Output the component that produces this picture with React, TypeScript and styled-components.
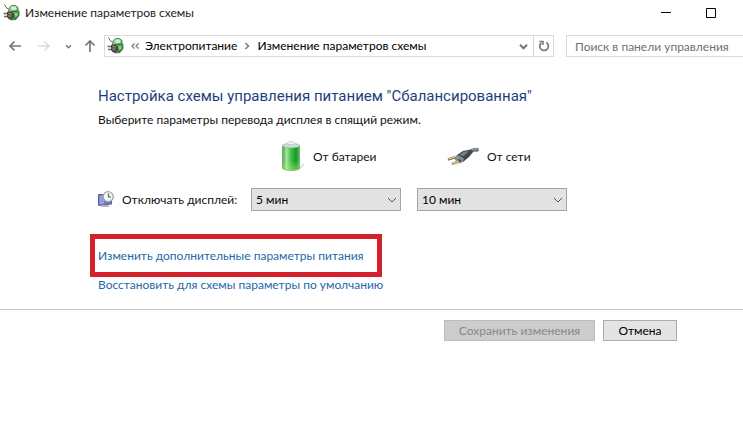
import React from "react";
import styled, { createGlobalStyle } from "styled-components";

const GlobalStyle = createGlobalStyle`
  *, *::before, *::after { box-sizing: border-box; }
  body {
    margin: 0;
    background: #fff;
    color: #111;
    font-family: Lato, "Open Sans", sans-serif;
    font-size: 12px;
    line-height: 16px;
  }
  button, input, select { font: inherit; color: inherit; }
  svg { flex: none; }
`;

const Window = styled.div`
  overflow: hidden;
  white-space: nowrap;
`;

const TitleBar = styled.header`
  display: flex;
  align-items: center;
  gap: 4px;
  height: 26px;
  padding-left: 3px;
`;

const Title = styled.span`
  flex: 1;
  color: #222;
`;

const WindowButton = styled.button`
  display: flex;
  align-items: center;
  justify-content: center;
  width: 41px;
  height: 26px;
  padding: 0;
  border: 0;
  background: none;
  color: #000;
  &:last-child { margin-right: 12px; }
`;

const NavBar = styled.nav`
  display: flex;
  align-items: center;
  height: 22px;
  margin-top: 9px;
`;

const NavButton = styled.button<{ $width: number; $faded?: boolean }>`
  display: flex;
  align-items: center;
  justify-content: center;
  width: ${(p) => p.$width}px;
  height: 22px;
  padding: 0;
  border: 0;
  background: none;
  color: ${(p) => (p.$faded ? "#dcdcdc" : "#777")};
`;

const History = styled.div`
  display: flex;
  width: 104px;
  padding-left: 2px;
`;

const Address = styled.div`
  display: flex;
  align-items: center;
  flex: 1;
  min-width: 0;
  height: 22px;
  padding-left: 2px;
  border: 1px solid #d9d9d9;
`;

const Crumb = styled.a`
  color: #000;
  text-decoration: none;
`;

const CrumbMark = styled.span<{ $width: number }>`
  display: flex;
  justify-content: center;
  width: ${(p) => p.$width}px;
  color: #777;
`;

const AddressSpacer = styled.span`
  flex: 1;
`;

const Refresh = styled(NavButton)`
  height: 20px;
  border-left: 1px solid #d9d9d9;
`;

const Search = styled.input`
  width: 177px;
  height: 22px;
  margin-left: 12px;
  padding: 0 0 0 8px;
  border: 1px solid #d9d9d9;
  border-right: 0;
  border-radius: 0;
  outline: 0;
  &::placeholder { color: #707070; opacity: 1; }
`;

const Content = styled.main`
  padding: 27px 24px 16px 98px;
`;

const Heading = styled.h1`
  margin: 0;
  color: #1f3f7c;
  font-family: Roboto, "Open Sans", sans-serif;
  font-size: 15px;
  font-weight: 400;
  line-height: 24px;
`;

const Lead = styled.p`
  margin: 4px 0 0;
`;

const Settings = styled.div`
  display: grid;
  grid-template-columns: 137px 150px 150px;
  column-gap: 16px;
  row-gap: 14px;
  align-items: center;
  margin-top: 12px;
`;

const Source = styled.div`
  display: flex;
  align-items: center;
  gap: 8px;
  height: 34px;
  padding-left: 30px;
`;

const SettingLabel = styled.label`
  display: flex;
  align-items: center;
  gap: 8px;
`;

const SelectBox = styled.div`
  display: grid;
  align-items: center;
  > * { grid-area: 1 / 1; }
  svg {
    justify-self: end;
    margin-right: 4px;
    color: #555;
    pointer-events: none;
  }
`;

const Select = styled.select`
  appearance: none;
  width: 100%;
  height: 23px;
  padding: 0 20px 0 4px;
  border: 1px solid #a5a5a5;
  border-radius: 0;
  background: #e2e2e2;
  color: #000;
`;

const Links = styled.div`
  display: flex;
  flex-direction: column;
  align-items: flex-start;
  margin-top: 23px;
`;

const Highlight = styled.div`
  margin-left: -8px;
  padding: 9px 13px 8px 3px;
  border: 5px solid #d3202b;
`;

const TaskLink = styled.a`
  display: block;
  color: #1f67a8;
  text-decoration: none;
`;

const Footer = styled.footer`
  display: flex;
  justify-content: flex-end;
  gap: 8px;
  padding: 10px 66px 0 0;
  border-top: 1px solid #c8c8c8;
`;

const ActionButton = styled.button<{ $width: number }>`
  width: ${(p) => p.$width}px;
  height: 21px;
  padding: 0;
  border: 1px solid #adadad;
  background: #e4e4e4;
  color: #000;
  line-height: 16px;
  &:disabled {
    border-color: #bdbdbd;
    background: #cccccc;
    color: #888;
  }
`;

const PowerIcon = () => (
  <svg width="18" height="18" viewBox="0 0 18 18" aria-hidden="true">
    <defs>
      <linearGradient id="power-body" x1="0" y1="0" x2=".8" y2="1">
        <stop offset="0" stopColor="#b9e6b4" />
        <stop offset=".55" stopColor="#5fb064" />
        <stop offset="1" stopColor="#1f6a33" />
      </linearGradient>
    </defs>
    <path d="M6 4 8.500 1.500h4L15 3.500v2.500l1 1.500v4L13 15.500 8 16l-3-3z" fill="url(#power-body)" stroke="#39703f" strokeWidth=".8" />
    <path d="M8 4 9 2.500h3.500L14 4.500 12.500 6H9z" fill="#d3f0ce" />
    <path d="M8 7.500h6" stroke="#2d6a38" strokeWidth=".9" />
    <path d="M11.500 9h3v2.500l-2 2z" fill="#8fd08c" />
    <path d="M1.500.5 3 3.500 5.500 5" stroke="#566b58" strokeWidth="1" fill="none" />
    <path d="M.5 9.500H5M1 12.500h4.500" stroke="#7b684f" strokeWidth="1.500" />
    <path d="M4.500 8H8l2.500 1.500V13L8 15H6l-1.500-2z" fill="#5a504a" stroke="#2b2925" strokeWidth=".6" />
    <path d="M5.500 9.500l3 .5M5.500 12H8" stroke="#c3ad8c" strokeWidth=".8" />
  </svg>
);

const Arrow = ({ turn }: { turn: number }) => (
  <svg width="14" height="14" viewBox="0 0 14 14" aria-hidden="true">
    <path
      d="M13 7H2M6.500 2.500 2 7l4.500 4.500"
      transform={`rotate(${turn} 7 7)`}
      fill="none"
      stroke="currentColor"
      strokeWidth="1.700"
    />
  </svg>
);

const Chevron = ({ size, weight }: { size: number; weight: number }) => (
  <svg width={size} height={size} viewBox={`0 0 ${size} ${size}`} aria-hidden="true">
    <path
      d={`M1 ${size / 4 + 0.5}L${size / 2} ${size * 0.75 - 0.5}L${size - 1} ${size / 4 + 0.5}`}
      fill="none"
      stroke="currentColor"
      strokeWidth={weight}
    />
  </svg>
);

const CrumbChevron = () => (
  <svg width="6" height="8" viewBox="0 0 6 8" aria-hidden="true">
    <path d="M1.500 1 4.500 4l-3 3" fill="none" stroke="currentColor" strokeWidth="1.500" />
  </svg>
);

const BackChevrons = () => (
  <svg width="9" height="8" viewBox="0 0 9 8" aria-hidden="true">
    <path d="M3.500 1.500 1 4l2.500 2.500M7.500 1.500 5 4l2.500 2.500" fill="none" stroke="currentColor" strokeWidth="1.200" />
  </svg>
);

const RefreshIcon = () => (
  <svg width="12" height="12" viewBox="0 0 12 12" aria-hidden="true">
    <path d="M8.300 2.500A4.300 4.300 0 1 1 3.200 3" fill="none" stroke="currentColor" strokeWidth="1.700" />
    <path d="M1.500 1.500h3.500V5" fill="none" stroke="currentColor" strokeWidth="1.500" />
  </svg>
);

const BatteryIcon = () => (
  <svg width="24" height="32" viewBox="0 0 24 32" aria-hidden="true">
    <defs>
      <linearGradient id="battery-side" x1="0" x2="1" y1="0" y2="0">
        <stop offset="0" stopColor="#46a84c" />
        <stop offset=".24" stopColor="#a2e6a0" />
        <stop offset=".5" stopColor="#45bf47" />
        <stop offset=".8" stopColor="#149927" />
        <stop offset="1" stopColor="#56b958" />
      </linearGradient>
      <linearGradient id="battery-glow" x1="0" x2="0" y1="0" y2="1">
        <stop offset=".6" stopColor="#b0f46c" stopOpacity="0" />
        <stop offset="1" stopColor="#b0f46c" stopOpacity=".5" />
      </linearGradient>
    </defs>
    <path d="M15 28 23 22v3l-6 5z" fill="#e1e6df" />
    <path d="M1.500 4.500v23c2 2.500 15 2.500 17 0v-23z" fill="url(#battery-side)" stroke="#55965a" strokeWidth=".6" />
    <path d="M1.500 4.500v23c2 2.500 15 2.500 17 0v-23z" fill="url(#battery-glow)" />
    <ellipse cx="10" cy="4.700" rx="8.500" ry="2.300" fill="#cfe3d3" stroke="#77a88a" strokeWidth=".6" />
    <path d="M6 2.500v2c1.500 1 6.500 1 8 0v-2z" fill="#c9d2da" />
    <ellipse cx="10" cy="2.200" rx="4" ry="1.500" fill="#f0f4f8" stroke="#a5b1b8" strokeWidth=".5" />
  </svg>
);

const PlugIcon = () => (
  <svg width="32" height="20" viewBox="0 0 32 20" aria-hidden="true">
    <path d="M8 17 19 12l-3 4-6 2z" fill="#e2e2e2" />
    <path d="M21 7c3-5 6-5 11-4.500" fill="none" stroke="#8b9199" strokeWidth="3.200" />
    <path d="M22 8c3-4.500 5-4.500 9-4" fill="none" stroke="#59606a" strokeWidth="1.300" />
    <path d="M10 8 16 4l8-1.500 2 2.500-4 5-5.500 4.500-3.500.5-5-4z" fill="#40454e" />
    <path d="M12 8 17 4.800l5-.8-5.500 5z" fill="#787e89" />
    <path d="m7.500 10.500 3-2.500 6.500 3.500-1 3-3 1.500-5-3z" fill="#8b919c" />
    <path d="m11 12 4 1-2 2.500-3-1.500z" fill="#4b515b" />
    <path d="M1 12.500 8.500 10M5 17l6.500-3" stroke="#846843" strokeWidth="2.400" />
    <path d="M1.500 12 8.500 9.500M5.500 16.500l6-2.800" stroke="#f0d8a8" strokeWidth="1.200" />
  </svg>
);

const DisplayClockIcon = () => (
  <svg width="16" height="17" viewBox="0 0 16 17" aria-hidden="true">
    <path d="M.5 3.500h13v9.500l-13 1.500z" fill="#6f78c4" stroke="#5560a0" strokeWidth="1" />
    <path d="M1.500 4.500H6v8.500l-4.500.5z" fill="#969fdc" />
    <path d="M4 14h6l1.500 2H3z" fill="#aeb3c8" />
    <circle cx="10.200" cy="5.700" r="5" fill="#f6f7ed" stroke="#9ba4b2" strokeWidth="1.300" />
    <path d="M10.500 2.500v3.500H13" fill="none" stroke="#5d626c" strokeWidth="1.200" />
  </svg>
);

const timeouts = ["5 мин", "10 мин", "15 мин", "30 мин"];

function TimeoutSelect({ id, label, value }: { id: string; label: string; value: string }) {
  return (
    <SelectBox>
      <Select id={id} aria-label={label} defaultValue={value}>
        {timeouts.map((t) => (
          <option key={t}>{t}</option>
        ))}
      </Select>
      <Chevron size={10} weight={1} />
    </SelectBox>
  );
}

export default function App() {
  return (
    <Window>
      <GlobalStyle />
      <TitleBar>
        <PowerIcon />
        <Title>Изменение параметров схемы</Title>
        <WindowButton aria-label="Свернуть">
          <svg width="10" height="10" viewBox="0 0 10 10" aria-hidden="true">
            <path d="M0 4.500h10" stroke="currentColor" />
          </svg>
        </WindowButton>
        <WindowButton aria-label="Развернуть">
          <svg width="10" height="10" viewBox="0 0 10 10" aria-hidden="true">
            <path d="M.5.5h9v9h-9z" fill="none" stroke="currentColor" />
          </svg>
        </WindowButton>
      </TitleBar>
      <NavBar>
        <History>
          <NavButton $width={26} aria-label="Назад"><Arrow turn={0} /></NavButton>
          <NavButton $width={32} $faded aria-label="Вперёд"><Arrow turn={180} /></NavButton>
          <NavButton $width={16} aria-label="Последние расположения"><Chevron size={7} weight={1.5} /></NavButton>
          <NavButton $width={28} aria-label="Вверх"><Arrow turn={90} /></NavButton>
        </History>
        <Address>
          <PowerIcon />
          <CrumbMark $width={20}><BackChevrons /></CrumbMark>
          <Crumb href="#power">Электропитание</Crumb>
          <CrumbMark $width={20}><CrumbChevron /></CrumbMark>
          <Crumb href="#plan">Изменение параметров схемы</Crumb>
          <AddressSpacer />
          <NavButton $width={20} aria-label="Предыдущие расположения"><Chevron size={9} weight={2} /></NavButton>
          <Refresh $width={20} aria-label="Обновить"><RefreshIcon /></Refresh>
        </Address>
        <Search placeholder="Поиск в панели управления" aria-label="Поиск в панели управления" />
      </NavBar>
      <Content>
        <Heading>Настройка схемы управления питанием "Сбалансированная"</Heading>
        <Lead>Выберите параметры перевода дисплея в спящий режим.</Lead>
        <Settings>
          <span />
          <Source><BatteryIcon />От батареи</Source>
          <Source><PlugIcon />От сети</Source>
          <SettingLabel htmlFor="display-battery"><DisplayClockIcon />Отключать дисплей:</SettingLabel>
          <TimeoutSelect id="display-battery" label="Отключать дисплей: от батареи" value="5 мин" />
          <TimeoutSelect id="display-mains" label="Отключать дисплей: от сети" value="10 мин" />
        </Settings>
        <Links>
          <Highlight>
            <TaskLink href="#advanced">Изменить дополнительные параметры питания</TaskLink>
          </Highlight>
          <TaskLink href="#defaults">Восстановить для схемы параметры по умолчанию</TaskLink>
        </Links>
      </Content>
      <Footer>
        <ActionButton $width={151} disabled>Сохранить изменения</ActionButton>
        <ActionButton $width={74}>Отмена</ActionButton>
      </Footer>
    </Window>
  );
}
